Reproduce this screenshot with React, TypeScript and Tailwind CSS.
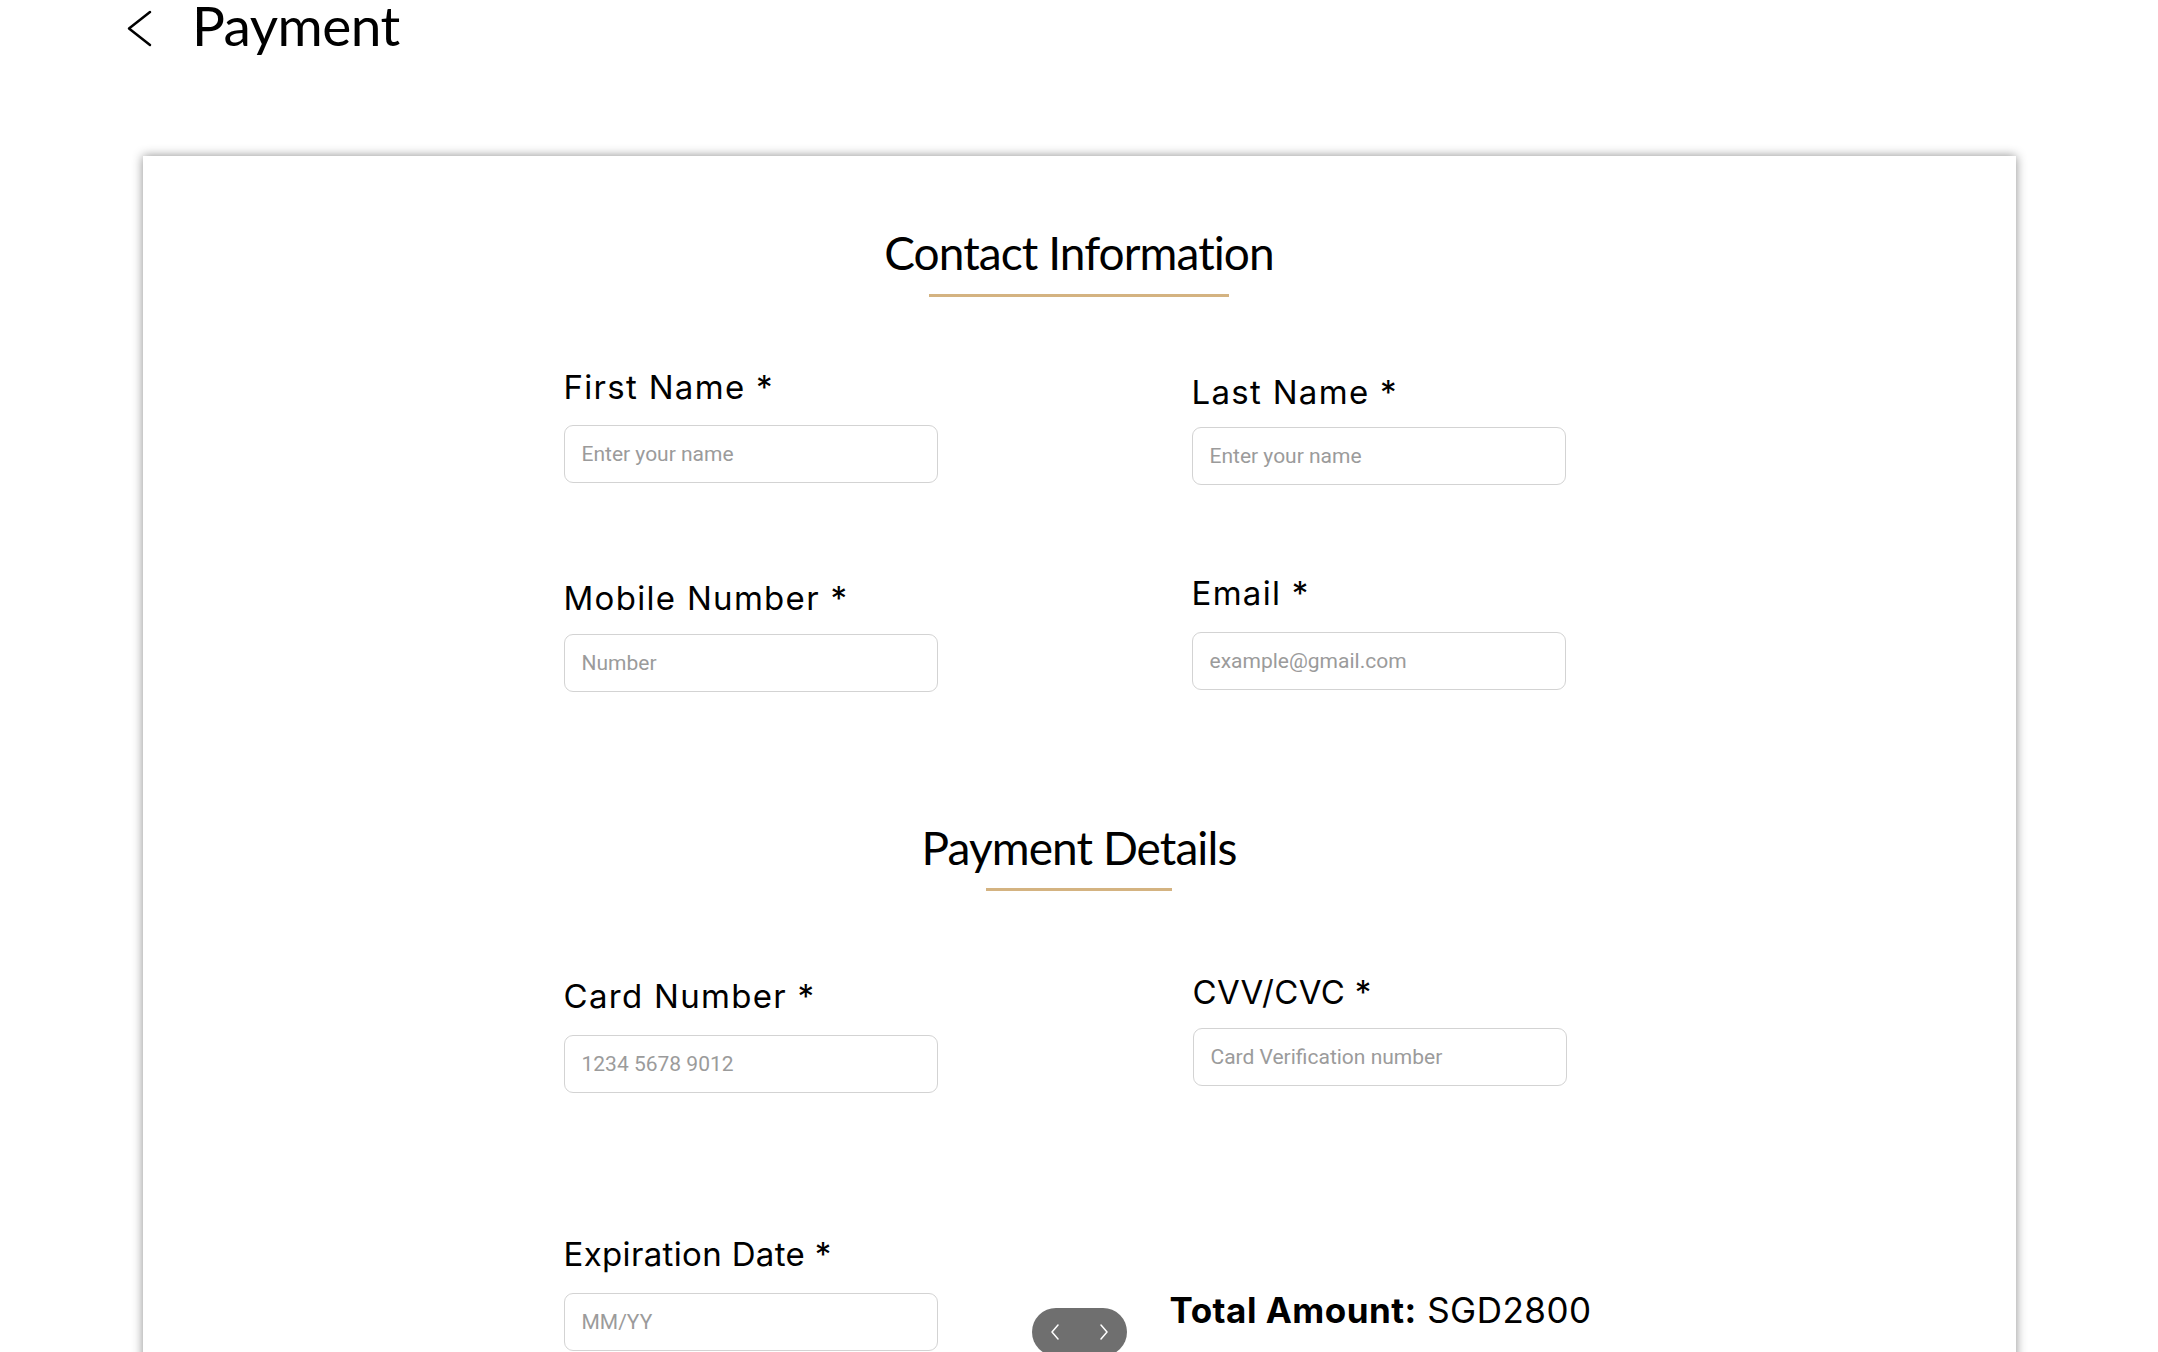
import React from "react";

interface FieldProps {
  label: string;
  placeholder: string;
  gap: string;
  className?: string;
  labelClass?: string;
}

function Field({ label, placeholder, gap, className = "", labelClass = "tracking-[1.3px]" }: FieldProps) {
  return (
    <div className={`flex flex-col ${className}`}>
      <label className={`font-['Inter',sans-serif] text-[33px] leading-[40px] text-black whitespace-nowrap ${labelClass}`}>
        {label} *
      </label>
      <input
        type="text"
        placeholder={placeholder}
        className={`${gap} h-[58px] w-[374px] rounded-[9px] border border-[#d3d3d3] bg-white px-[17px] font-['Roboto',sans-serif] text-[21px] text-black outline-none placeholder:text-[#9b9b9b]`}
      />
    </div>
  );
}

function SectionTitle({ title, lineWidth, lineGap }: { title: string; lineWidth: string; lineGap: string }) {
  return (
    <div className="flex flex-col items-center">
      <h2 className="font-['Lato',sans-serif] text-[46px] leading-[48px] tracking-[-0.02em] text-black [font-variant-ligatures:none]">
        {title}
      </h2>
      <div className={`${lineGap} ${lineWidth} h-[3px] bg-[#d4b381]`} />
    </div>
  );
}

export default function App() {
  return (
    <div className="min-h-screen bg-white">
      <div className="flex items-start pl-[125px]">
        <button className="mt-[9px]" aria-label="Back">
          <svg width="30" height="40" viewBox="0 0 30 40" fill="none">
            <polyline points="25,3 4,19.5 25,36" stroke="#000" strokeWidth="2.5" strokeLinecap="round" strokeLinejoin="round" />
          </svg>
        </button>
        <h1 className="ml-[37px] -mt-[3px] font-['Lato',sans-serif] text-[55px] leading-[56px] tracking-[-0.01em] text-black [font-variant-ligatures:none]">
          Payment
        </h1>
      </div>

      <div className="mx-auto mt-[103px] w-[1873px] bg-white pt-[73px] pb-[80px] shadow-[0_0_10px_rgba(0,0,0,0.45)]">
        <SectionTitle title="Contact Information" lineWidth="w-[300px]" lineGap="mt-[17px]" />

        <div className="mt-[70px] flex pl-[421px]">
          <div className="flex flex-col">
            <Field label="First Name" placeholder="Enter your name" gap="mt-[18px]" />
            <Field label="Mobile Number" placeholder="Number" gap="mt-[16px]" className="mt-[95px]" />
          </div>
          <div className="ml-[254px] flex flex-col pt-[5px]">
            <Field label="Last Name" placeholder="Enter your name" gap="mt-[15px]" />
            <Field label="Email" placeholder="example@gmail.com" gap="mt-[19px]" className="mt-[88px]" />
          </div>
        </div>

        <div className="mt-[132px]">
          <SectionTitle title="Payment Details" lineWidth="w-[186px]" lineGap="mt-[16px]" />
        </div>

        <div className="mt-[81px] flex pl-[421px]">
          <div className="flex flex-col pt-[4px]">
            <Field label="Card Number" placeholder="1234 5678 9012" gap="mt-[19px]" />
          </div>
          <div className="ml-[255px] flex flex-col">
            <Field label="CVV/CVC" placeholder="Card Verification number" gap="mt-[16px]" labelClass="tracking-[0.35px]" />
          </div>
        </div>

        <div className="mt-[141px] flex items-start pl-[421px]">
          <Field label="Expiration Date" placeholder="MM/YY" gap="mt-[19px]" labelClass="tracking-[0.35px]" />
          <div className="ml-[94px] mt-[74px] flex h-[48px] w-[95px] items-center justify-between rounded-full bg-[#6f6f6f] px-[18px]">
            <svg width="10" height="16" viewBox="0 0 10 16" fill="none">
              <polyline points="8,1 2,8 8,15" stroke="#fff" strokeWidth="1.5" strokeLinecap="round" strokeLinejoin="round" />
            </svg>
            <svg width="10" height="16" viewBox="0 0 10 16" fill="none">
              <polyline points="2,1 8,8 2,15" stroke="#fff" strokeWidth="1.5" strokeLinecap="round" strokeLinejoin="round" />
            </svg>
          </div>
          <p className="ml-[43px] mt-[56px] whitespace-nowrap font-['Inter',sans-serif] text-[35px] leading-[40px] tracking-[0.5px] text-black">
            <span className="font-bold">Total Amount:</span> SGD2800
          </p>
        </div>
      </div>
    </div>
  );
}
